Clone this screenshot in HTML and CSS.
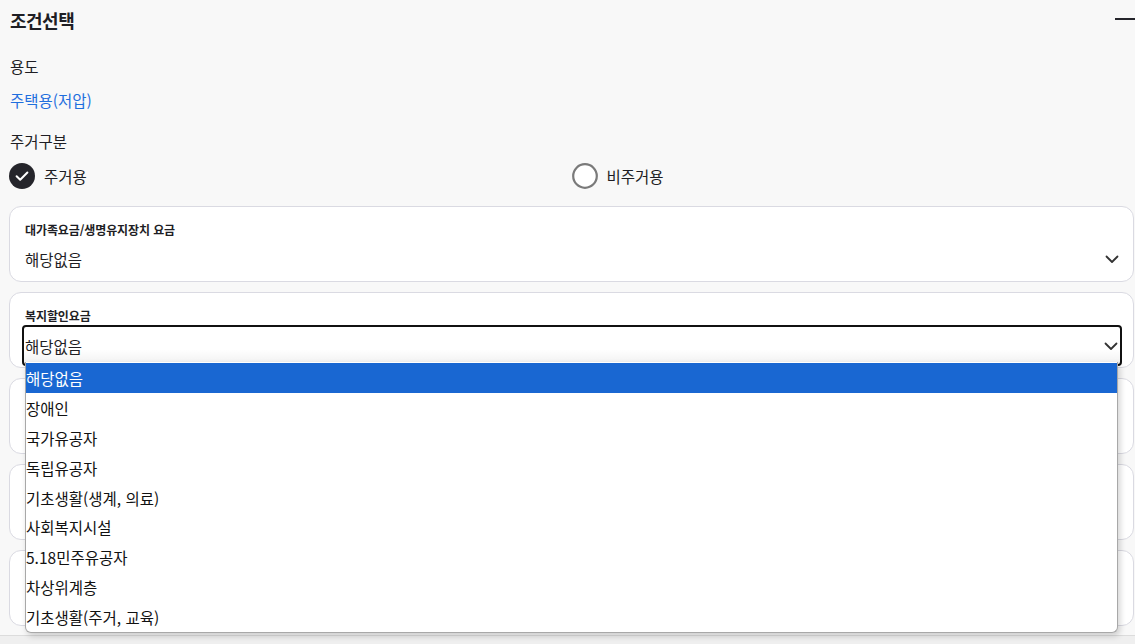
FILE: index.html
```html
<!DOCTYPE html>
<html lang="ko">
<head>
<meta charset="utf-8">
<link rel="stylesheet" href="styles.css">
</head>
<body>
<div class="page">
  <div class="header">
    <h1 class="title">조건선택</h1>
    <span class="collapse"></span>
  </div>

  <div class="field-label first">용도</div>
  <div class="field-value">주택용(저압)</div>

  <div class="field-label second">주거구분</div>
  <div class="radio-row">
    <label class="radio">
      <span class="radio-mark checked">
        <svg width="26" height="26" viewBox="0 0 26 26"><circle cx="13" cy="13" r="13" fill="#25252b"/><path d="M7.6 13.2l3.6 3.5 7.2-7.2" fill="none" stroke="#fff" stroke-width="2" stroke-linecap="round" stroke-linejoin="round"/></svg>
      </span>
      <span class="radio-text">주거용</span>
    </label>
    <label class="radio">
      <span class="radio-mark">
        <svg width="26" height="26" viewBox="0 0 26 26"><circle cx="13" cy="13" r="11.8" fill="#fff" stroke="#7a7a7a" stroke-width="2.2"/></svg>
      </span>
      <span class="radio-text">비주거용</span>
    </label>
  </div>

  <div class="cards">
    <div class="card">
      <div class="card-label">대가족요금/생명유지장치 요금</div>
      <div class="card-select">
        <span>해당없음</span>
        <svg class="chev" width="14" height="9" viewBox="0 0 14 9"><path d="M1.5 1.5l5.5 5.5 5.5-5.5" fill="none" stroke="#333" stroke-width="1.8" stroke-linecap="round" stroke-linejoin="round"/></svg>
      </div>
    </div>

    <div class="card card-open">
      <div class="card-label inset">복지할인요금</div>
      <div class="select-box">
        <span>해당없음</span>
        <svg class="chev" width="14" height="9" viewBox="0 0 14 9"><path d="M1.5 1.5l5.5 5.5 5.5-5.5" fill="none" stroke="#333" stroke-width="1.8" stroke-linecap="round" stroke-linejoin="round"/></svg>
        <ul class="dropdown">
          <li class="selected">해당없음</li>
          <li>장애인</li>
          <li>국가유공자</li>
          <li>독립유공자</li>
          <li>기초생활(생계, 의료)</li>
          <li>사회복지시설</li>
          <li>5.18민주유공자</li>
          <li>차상위계층</li>
          <li>기초생활(주거, 교육)</li>
        </ul>
      </div>
    </div>

    <div class="card">
      <div class="card-label">출산가구</div>
    </div>
    <div class="card">
      <div class="card-label">다자녀가구</div>
    </div>
    <div class="card">
      <div class="card-label">계약전력</div>
    </div>
  </div>
</div>
<div class="footer"></div>
</body>
</html>
```

FILE: styles.css
```css
* { box-sizing: border-box; }
html, body {
  margin: 0;
  padding: 0;
  background: #f8f8f8;
  font-family: "Noto Sans CJK KR", "Noto Sans", sans-serif;
  color: #1e1e24;
  overflow: hidden;
}
.page {
  padding: 0 1px 0 9px;
}
.header {
  height: 40px;
  display: flex;
  align-items: center;
  justify-content: space-between;
}
.title {
  margin: 0 0 0 1px;
  font-size: 18px;
  font-weight: 700;
  line-height: 24px;
  letter-spacing: -0.5px;
}
.collapse {
  display: block;
  width: 20px;
  height: 2px;
  background: #25252b;
  margin-right: -1px;
  margin-top: -2px;
}
.field-label {
  font-size: 15.5px;
  line-height: 24px;
  margin-left: 1px;
}
.field-label.first { margin-top: 14px; }
.field-label.second { margin-top: 17px; }
.field-value {
  margin-top: 10px;
  margin-left: 1px;
  font-size: 15.5px;
  line-height: 24px;
  color: #1f6fde;
}
.radio-row {
  margin-top: 8px;
  height: 30px;
  display: grid;
  grid-template-columns: 1fr 1fr;
  align-items: center;
}
.radio {
  display: flex;
  align-items: center;
  gap: 9px;
}
.radio-mark { display: block; width: 26px; height: 26px; }
.radio-mark svg { display: block; }
.radio-text {
  font-size: 15.5px;
  line-height: 24px;
}
.cards {
  margin-top: 15px;
  display: flex;
  flex-direction: column;
  gap: 10px;
}
.card {
  height: 76px;
  background: #fff;
  border: 1px solid #dadae2;
  border-radius: 12px;
  padding: 15px 14px 0 15px;
}
.card-label {
  font-size: 12px;
  font-weight: 700;
  line-height: 16px;
  letter-spacing: -0.1px;
}
.card-select {
  margin-top: 10px;
  height: 22px;
  display: flex;
  align-items: center;
  justify-content: space-between;
  font-size: 15.5px;
  line-height: 22px;
}
.chev { display: block; }
.card-open {
  position: relative;
  z-index: 2;
  padding: 15px 11px 0 12px;
}
.card-label.inset { padding-left: 3px; }
.select-box {
  position: relative;
  margin-top: 1px;
  height: 41px;
  border: 2px solid #111;
  border-radius: 4px;
  display: flex;
  align-items: center;
  justify-content: space-between;
  padding: 0 1px 0 1px;
  font-size: 15.5px;
  background: linear-gradient(to bottom, #fff 60%, #f1f1f1 100%);
}
.select-box .chev { margin-right: 1px; margin-top: 2px; }
.dropdown {
  position: absolute;
  z-index: 5;
  top: 35px;
  left: 1px;
  width: 1093px;
  margin: 0;
  padding: 1px 0 0 0;
  list-style: none;
  background: #fff;
  border: 1px solid #a8a8a8;
  border-top: none;
  border-radius: 0 0 6px 6px;
  box-shadow: 2px 3px 6px rgba(0, 0, 0, 0.18);
  overflow: hidden;
}
.dropdown li {
  height: 29.9px;
  line-height: 30px;
  padding-left: 0;
  font-size: 15.5px;
  color: #111;
}
.dropdown li.selected {
  background: #1967d2;
  color: #fff;
}
.footer {
  margin-top: 9px;
  height: 20px;
  border-top: 1px solid #dcdcdc;
  background: #efefef;
}
```
